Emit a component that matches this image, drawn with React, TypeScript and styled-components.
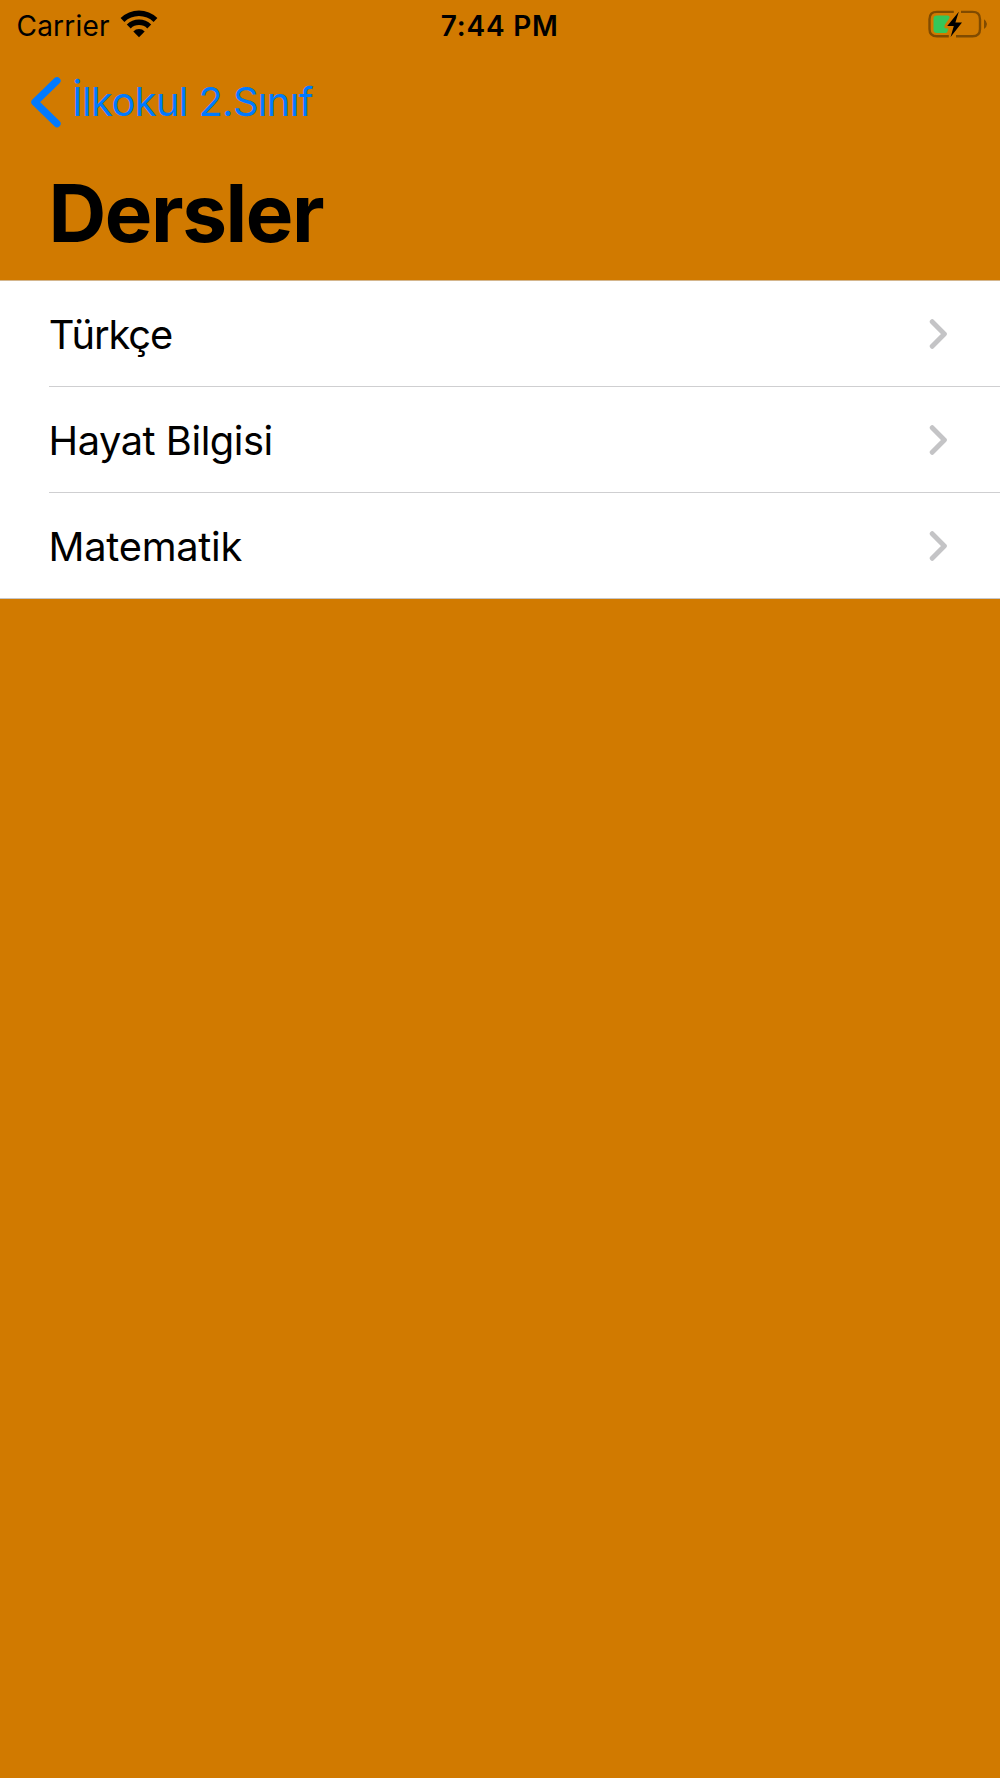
import React from "react";
import styled, { createGlobalStyle } from "styled-components";

const GlobalStyle = createGlobalStyle`
  body { margin: 0; background: #d17a00; }
  * { box-sizing: border-box; }
`;

const Screen = styled.div`
  display: flex;
  flex-direction: column;
  width: 1000px;
  height: 1778px;
  overflow: hidden;
  background: #d17a00;
  color: #000;
  font-family: Inter, "Liberation Sans", sans-serif;
  font-size: 39.8px;
`;

const StatusBar = styled.header`
  display: grid;
  grid-template-columns: 1fr auto 1fr;
  height: 48px;
  padding: 3px 13px 0 16px;
  line-height: 47px;
  font-size: 28px;
`;

const Network = styled.div`
  display: flex;
  gap: 10px;
`;

const Carrier = styled.span`
  padding-left: 0.5px;
  letter-spacing: 0.2px;
`;

const WifiIcon = styled.svg`
  margin-top: 6px;
`;

const Clock = styled.time`
  padding-right: 3.6px;
  font-weight: 600;
  letter-spacing: 0.8px;
`;

const BatteryIcon = styled.svg`
  justify-self: end;
  margin-top: 7.4px;
`;

const NavBar = styled.nav`
  display: flex;
  height: 107px;
  padding-left: 30px;
`;

const BackButton = styled.button`
  display: flex;
  align-items: center;
  gap: 8px;
  padding: 0;
  border: 0;
  background: none;
  color: #007aff;
  font: inherit;
`;

const BackLabel = styled.span`
  letter-spacing: -0.62px;
`;

const Title = styled.h1`
  height: 125px;
  margin: 0;
  padding: 8px 0 0 48.5px;
  font-size: 80px;
  line-height: 100px;
  font-weight: 700;
  letter-spacing: -1.45px;
`;

const List = styled.ul`
  margin: 0;
  padding: 0;
  list-style: none;
  background: #fff;
  border-top: 1px solid #d4b68d;
  border-bottom: 1px solid #c6c6c8;
`;

const Row = styled.li`
  display: flex;
  padding-left: 48.5px;
`;

const RowContent = styled.div<{ $divided: boolean }>`
  display: flex;
  flex: 1;
  align-items: center;
  justify-content: space-between;
  height: ${(p) => (p.$divided ? 106 : 105)}px;
  padding-right: 51px;
  border-bottom: ${(p) => (p.$divided ? "1px solid #cfcfd1" : "0")};
`;

const Label = styled.span<{ $tracking: number; $indent: number }>`
  padding-top: 1px;
  padding-left: ${(p) => p.$indent}px;
  letter-spacing: ${(p) => p.$tracking}px;
`;

const lessons = [
  { name: "Türkçe", tracking: -1.05, indent: 0.3 },
  { name: "Hayat Bilgisi", tracking: -0.45, indent: 0 },
  { name: "Matematik", tracking: -0.25, indent: 0 },
];

export default function App() {
  return (
    <>
      <GlobalStyle />
      <Screen>
        <StatusBar>
          <Network>
            <Carrier>Carrier</Carrier>
            <WifiIcon width="38" height="30" viewBox="0 0 38 30">
              <path d="M0.6 8.9A26.5 26.5 0 0 1 37.4 8.9L33.6 12.9A21 21 0 0 0 4.4 12.9Z" />
              <path d="M6.8 15.4A17.6 17.6 0 0 1 31.2 15.4L27.3 19.4A12 12 0 0 0 10.7 19.4Z" />
              <path d="M13.3 22.4A8 8 0 0 1 24.7 22.4L19 28.3Z" />
            </WifiIcon>
          </Network>
          <Clock>7:44 PM</Clock>
          <BatteryIcon width="60" height="30" viewBox="0 0 60 30">
            <path
              d="M26.8 1.9H10Q2.5 1.9 2.5 9.2V19Q2.5 26.3 10 26.3H21.8M29 26.3H45.5Q53 26.3 53 19V9.2Q53 1.9 45.5 1.9H34"
              fill="none"
              stroke="#804b00"
              strokeWidth="2.4"
            />
            <path d="M57 9.3Q60 11.2 60 14.1T57 18.9Z" fill="#804b00" />
            <path
              d="M10 5.4H20.5Q23 5.4 22.5 8L18 14.5Q16.3 18 19 18.4H21.3L20.5 21.5Q20 23 18 23H10Q6.5 23 6.5 19.8V8.6Q6.5 5.4 10 5.4Z"
              fill="#34c759"
            />
            <path d="M31.8 1.8L20.2 16H26.8L23.6 27L35 12.6H28.4Z" />
          </BatteryIcon>
        </StatusBar>
        <NavBar>
          <BackButton>
            <svg width="34" height="54" viewBox="0 0 34 54">
              <path
                d="M27 5.7L4.9 27.2L27 48.7"
                fill="none"
                stroke="currentColor"
                strokeWidth="7.2"
                strokeLinecap="round"
                strokeLinejoin="round"
              />
            </svg>
            <BackLabel>İlkokul 2.Sınıf</BackLabel>
          </BackButton>
        </NavBar>
        <Title>Dersler</Title>
        <List>
          {lessons.map((lesson, i) => (
            <Row key={lesson.name}>
              <RowContent $divided={i < lessons.length - 1}>
                <Label $tracking={lesson.tracking} $indent={lesson.indent}>
                  {lesson.name}
                </Label>
                <svg width="20" height="32" viewBox="0 0 20 32">
                  <path
                    d="M3.2 3.7L15.4 16L3.2 28.3"
                    fill="none"
                    stroke="#c4c4c6"
                    strokeWidth="4.9"
                    strokeLinecap="round"
                    strokeLinejoin="round"
                  />
                </svg>
              </RowContent>
            </Row>
          ))}
        </List>
      </Screen>
    </>
  );
}
